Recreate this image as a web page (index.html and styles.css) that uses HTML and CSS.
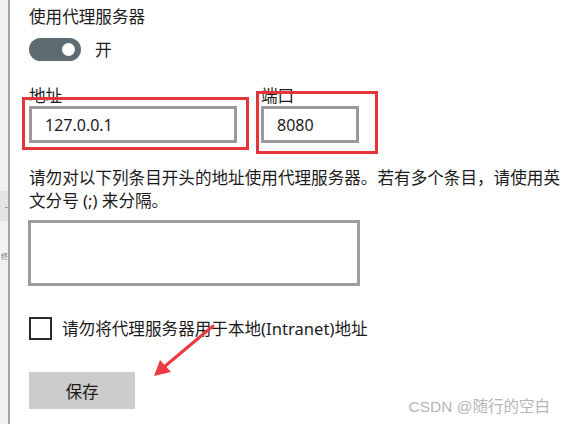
FILE: index.html
```html
<!DOCTYPE html>
<html lang="zh-CN">
<head>
<meta charset="utf-8">
<title>代理设置</title>
<link rel="stylesheet" href="styles.css">
</head>
<body>
<div class="page">
  <aside class="rail">
    <div class="rail-item rail-active"><span class="rail-text">-</span></div>
    <div class="rail-item"><span class="rail-text rail-small">终</span></div>
  </aside>
  <main class="content">
    <div class="title">使用代理服务器</div>
    <div class="toggle-row">
      <span class="toggle"><span class="knob"></span></span>
      <span class="toggle-label">开</span>
    </div>
    <div class="fields">
      <div class="field field-addr">
        <div class="label">地址</div>
        <div class="input input-addr">127.0.0.1</div>
        <span class="mark mark-addr"></span>
      </div>
      <div class="field field-port">
        <div class="label">端口</div>
        <div class="input input-port">8080</div>
        <span class="mark mark-port"></span>
      </div>
    </div>
    <p class="desc">请勿对以下列条目开头的地址使用代理服务器。若有多个条目，请使用英文分号 (;) 来分隔。</p>
    <div class="textarea"></div>
    <div class="check-row">
      <span class="checkbox"></span>
      <span class="check-label">请勿将代理服务器用于本地(Intranet)地址</span>
      <svg class="arrow" width="70" height="60" viewBox="0 0 70 60">
        <path d="M62 3 L13 44" stroke="#ec3a3e" stroke-width="3" stroke-linecap="round" fill="none"/>
        <path d="M3 53 L9 37 L20 49 Z" fill="#ec3a3e"/>
      </svg>
    </div>
    <div class="button">保存</div>
  </main>
  <div class="watermark">CSDN @随行的空白</div>
</div>
</body>
</html>
```
FILE: styles.css
```css
html, body {
  margin: 0;
  padding: 0;
  background: #ffffff;
}
body {
  font-family: "Noto Sans", "Noto Sans CJK SC", sans-serif;
  color: #1b1b1b;
  width: 563px;
  height: 424px;
  overflow: hidden;
}
.page {
  position: relative;
  display: flex;
  width: 563px;
  height: 424px;
}
.rail {
  width: 8px;
  flex: none;
  background: #f2f2f2;
  border-right: 2px solid #a3a3a3;
  overflow: hidden;
  display: flex;
  flex-direction: column;
  padding-top: 191px;
  box-sizing: content-box;
}
.rail-item {
  height: 30px;
  display: flex;
  align-items: center;
  justify-content: flex-end;
  overflow: hidden;
}
.rail-active {
  background: #e4e4e4;
}
.rail-item + .rail-item {
  margin-top: 20px;
}
.rail-text {
  font-family: "Noto Sans CJK SC", sans-serif;
  font-size: 10px;
  line-height: 10px;
  color: #777;
  white-space: nowrap;
}
.rail-small {
  font-size: 7px;
  line-height: 8px;
}
.content {
  flex: 1;
  padding: 6px 0 0 19px;
  font-size: 16.6px;
  min-width: 0;
}
.title {
  line-height: 22px;
  height: 22px;
  white-space: nowrap;
}
.toggle-row {
  display: flex;
  align-items: center;
  margin-top: 10px;
  height: 23px;
}
.toggle {
  width: 52px;
  height: 23px;
  border-radius: 12px;
  background: #5e6b72;
  position: relative;
  flex: none;
}
.knob {
  position: absolute;
  right: 6px;
  top: 5px;
  width: 13px;
  height: 13px;
  border-radius: 50%;
  background: #fff;
}
.toggle-label {
  margin-left: 14px;
  line-height: 22px;
}
.fields {
  display: flex;
  margin-top: 24px;
  gap: 24px;
}
.field {
  position: relative;
}
.label {
  line-height: 22px;
  height: 21px;
  white-space: nowrap;
}
.input {
  box-sizing: border-box;
  height: 37px;
  border: 3px solid #9a9a9a;
  background: #fff;
  display: flex;
  align-items: center;
  padding-left: 13px;
  font-size: 16px;
}
.input-addr { width: 208px; }
.input-port { width: 98px; }
.mark {
  position: absolute;
  border: 3px solid #e5353b;
  box-sizing: border-box;
}
.mark-addr {
  left: -7px;
  top: 12px;
  width: 227px;
  height: 53px;
}
.mark-port {
  left: -5px;
  top: 6px;
  width: 122px;
  height: 63px;
}
.desc {
  margin: 23px 0 0 0;
  line-height: 23px;
  width: 540px;
}
.textarea {
  box-sizing: border-box;
  width: 332px;
  height: 66px;
  margin-top: 8px;
  margin-left: -1px;
  border: 3px solid #9c9c9c;
}
.check-row {
  position: relative;
  display: flex;
  align-items: center;
  margin-top: 31px;
  height: 23px;
}
.checkbox {
  box-sizing: border-box;
  width: 23px;
  height: 23px;
  border: 2px solid #2a2a2a;
  flex: none;
}
.check-label {
  margin-left: 10px;
  line-height: 22px;
  white-space: nowrap;
}
.arrow {
  position: absolute;
  left: 122px;
  top: 6px;
}
.button {
  margin-top: 32px;
  width: 106px;
  height: 37px;
  background: #cccccc;
  display: flex;
  align-items: center;
  justify-content: center;
}
.watermark {
  position: absolute;
  right: 13px;
  bottom: 8px;
  font-family: "Liberation Sans", "Noto Sans CJK SC", sans-serif;
  font-size: 15.5px;
  color: #b5b5b5;
  white-space: nowrap;
}
```
